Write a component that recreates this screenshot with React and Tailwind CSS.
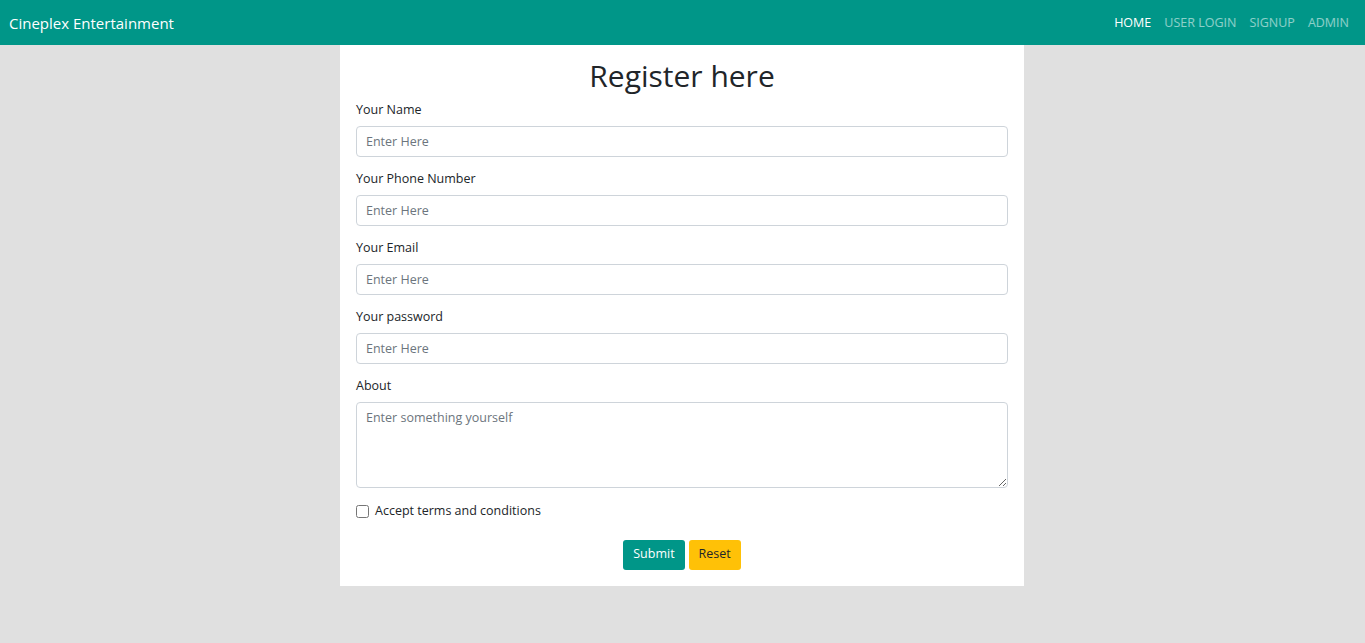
const font = { fontFamily: '"Open Sans", "Noto Sans", sans-serif' };

const fields = [
  { label: 'Your Name', type: 'text' },
  { label: 'Your Phone Number', type: 'text' },
  { label: 'Your Email', type: 'email' },
  { label: 'Your password', type: 'password' },
];

export default function App() {
  return (
    <div className="min-h-screen bg-[#e0e0e0] text-[#212529]" style={font}>
      <nav className="flex h-[45px] items-center justify-between bg-[#009688] pl-[9px] pr-4">
        <span className="pt-px text-[15px] text-white">Cineplex Entertainment</span>
        <div className="flex gap-[13px] pt-px text-[12.5px]">
          <a className="text-white">HOME</a>
          <a className="text-white/55">USER LOGIN</a>
          <a className="text-white/55">SIGNUP</a>
          <a className="text-white/55">ADMIN</a>
        </div>
      </nav>

      <div className="ml-[340px] w-[684px] bg-white px-4 pb-4">
        <h1 className="pt-[10px] text-center text-[30px] leading-[42px]">Register here</h1>
        <form className="mt-[4px]" onSubmit={(e) => e.preventDefault()}>
          {fields.map((f) => (
            <div key={f.label} className="mb-[13px]">
              <label className="mb-[7px] block text-[12.5px] leading-[18px]">{f.label}</label>
              <input
                type={f.type}
                placeholder="Enter Here"
                className="block h-[31px] w-full rounded-[4px] border border-[#ced4da] px-[9px] text-[12.5px] outline-none placeholder:text-[#6c757d]"
              />
            </div>
          ))}
          <div className="mb-[14px]">
            <label className="mb-[7px] block text-[12.5px] leading-[18px]">About</label>
            <textarea
              placeholder="Enter something yourself"
              className="block h-[86px] w-full rounded-[4px] border border-[#ced4da] px-[9px] py-[6px] text-[12.5px] outline-none placeholder:text-[#6c757d]"
            />
          </div>
          <label className="flex items-center gap-[6px] text-[12.5px]">
            <input type="checkbox" className="h-[13px] w-[13px] rounded-[3px] border-[#ced4da]" />
            Accept terms and conditions
          </label>
          <div className="mt-[19px] flex justify-center gap-1">
            <button type="submit" className="h-[30px] rounded-[3px] bg-[#009688] px-[10px] text-[12.5px] text-white">
              Submit
            </button>
            <button type="reset" className="h-[30px] rounded-[3px] bg-[#ffc107] px-[10px] text-[12.5px] text-[#212529]">
              Reset
            </button>
          </div>
        </form>
      </div>
    </div>
  );
}
